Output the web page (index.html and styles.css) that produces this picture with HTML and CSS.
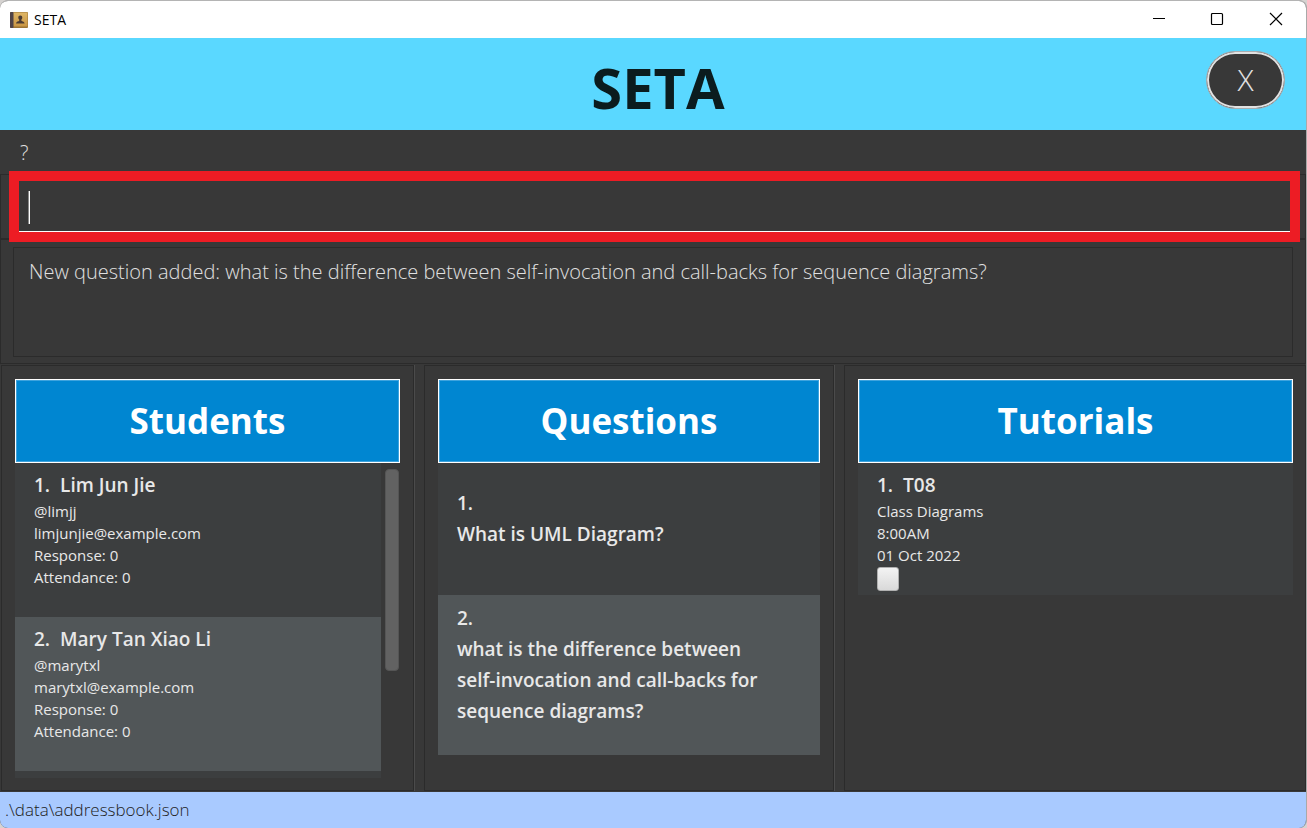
FILE: index.html
```html
<!DOCTYPE html>
<html lang="en">
<head>
<meta charset="utf-8">
<title>SETA</title>
<link rel="stylesheet" href="styles.css">
</head>
<body>
<div class="window">
  <header class="titlebar">
    <svg class="app-icon" width="18" height="18" viewBox="0 0 18 18" aria-hidden="true">
      <defs><linearGradient id="cover" x1="0" y1="0" x2="0" y2="1"><stop offset="0" stop-color="#dfb666"/><stop offset="1" stop-color="#c99643"/></linearGradient></defs>
      <rect x="0" y="1" width="18" height="16" rx="1" fill="#9b7435"/>
      <rect x="3" y="1.500" width="14.500" height="14" fill="url(#cover)"/>
      <rect x="0" y="1" width="3.500" height="16" rx="1" fill="#4f4347"/>
      <path d="M10.300 4.500c1.400 0 2 .9 2 2 0 1-.5 1.700-.9 2.100v1.200c.4.600 3 .6 3.200 2.700H6c.2-2.100 2.800-2.100 3.200-2.700V8.600c-.4-.4-.9-1.100-.9-2.100 0-1.100.6-2 2-2z" fill="#4a3b33"/>
    </svg>
    <span class="window-title">SETA</span>
    <button class="win-btn" aria-label="Minimize"><svg width="14" height="14" viewBox="0 0 14 14"><path d="M1 6.500h12" stroke="#000" fill="none"/></svg></button>
    <button class="win-btn" aria-label="Maximize"><svg width="14" height="14" viewBox="0 0 14 14"><rect x="1.500" y="1.500" width="11" height="11" rx="1" stroke="#000" stroke-width="1.200" fill="none"/></svg></button>
    <button class="win-btn" aria-label="Close"><svg width="14" height="14" viewBox="0 0 14 14"><path d="M1 1l12 12M13 1L1 13" stroke="#000" stroke-width="1.200" fill="none"/></svg></button>
  </header>

  <div class="banner">
    <h1 class="banner-title">SETA</h1>
    <button class="exit-btn">X</button>
  </div>

  <nav class="menu"><button class="menu-item">?</button></nav>

  <form class="command">
    <div class="command-field"><input class="command-input" type="text" aria-label="Command"></div>
    <div class="highlight"></div>
  </form>

  <section class="result">
    <p class="result-box">New question added: what is the difference between self-invocation and call-backs for sequence diagrams?</p>
  </section>

  <main class="panels">
    <section class="panel">
      <h2 class="panel-title">Students</h2>
      <div class="scroll-area">
        <ul class="list">
          <li class="card student">
            <h3 class="name"><span>1.</span><span>Lim Jun Jie</span></h3>
            <p class="line">@limjj</p>
            <p class="line">limjunjie@example.com</p>
            <p class="line">Response: 0</p>
            <p class="line">Attendance: 0</p>
          </li>
          <li class="card student alt">
            <h3 class="name"><span>2.</span><span>Mary Tan Xiao Li</span></h3>
            <p class="line">@marytxl</p>
            <p class="line">marytxl@example.com</p>
            <p class="line">Response: 0</p>
            <p class="line">Attendance: 0</p>
          </li>
          <li class="card rest"></li>
        </ul>
        <div class="scrollbar"><div class="thumb"></div></div>
      </div>
    </section>

    <div class="divider"></div>

    <section class="panel">
      <h2 class="panel-title">Questions</h2>
      <ul class="list">
        <li class="card question">
          <p class="question-text">1.</p>
          <h3 class="question-text">What is UML Diagram?</h3>
        </li>
        <li class="card question alt long">
          <p class="question-text">2.</p>
          <h3 class="question-text">what is the difference between self-invocation and call-backs for sequence diagrams?</h3>
        </li>
      </ul>
    </section>

    <div class="divider"></div>

    <section class="panel">
      <h2 class="panel-title">Tutorials</h2>
      <ul class="list">
        <li class="card tutorial">
          <h3 class="name"><span>1.</span><span>T08</span></h3>
          <p class="line">Class Diagrams</p>
          <p class="line">8:00AM</p>
          <p class="line">01 Oct 2022</p>
          <input class="check" type="checkbox" aria-label="Mark T08 as done">
        </li>
      </ul>
    </section>
  </main>

  <footer class="status">.\data\addressbook.json</footer>
</div>
</body>
</html>
```

FILE: styles.css
```css
* { box-sizing: border-box; }
body, h1, h2, h3, p, ul { margin: 0; padding: 0; }
ul { list-style: none; }
body {
  background: #d6d3d1;
  font-family: "Open Sans", "Noto Sans", sans-serif;
}
button { font-family: inherit; border: 0; background: none; padding: 0; }

.window {
  display: flex;
  flex-direction: column;
  min-height: 100vh;
  border-top: 1px solid #b4b4b4;
  border-right: 1px solid #a9a9a9;
  border-radius: 8px;
  overflow: hidden;
  background: #383838;
}

.titlebar {
  display: flex;
  align-items: center;
  height: 37px;
  padding-left: 10px;
  background: #fff;
}
.window-title { flex: 1; margin-left: 6px; font-size: 14px; color: #000; }
.win-btn { display: grid; place-items: center; width: 58px; height: 36px; padding-bottom: 2px; }
.win-btn:last-child { width: 60px; }

.banner {
  display: grid;
  grid-template-columns: 110px 1fr 100px;
  align-items: center;
  height: 92px;
  background: #5ad8ff;
}
.banner-title {
  grid-column: 2;
  padding-top: 6px;
  text-align: center;
  font-size: 56px;
  line-height: 72px;
  font-weight: 700;
  color: #0b1c1e;
}
.exit-btn {
  width: 79px;
  height: 58px;
  margin-bottom: 9px;
  border: 1px solid #a9adb0;
  border-radius: 29px;
  background: #383838;
  box-shadow: inset 0 0 0 2px #e2e2e2;
  color: #e2e2e2;
  font-size: 30px;
  font-weight: 300;
}

.menu { height: 44px; padding-left: 20px; display: flex; align-items: center; }
.menu-item { color: #e0e0e0; font-size: 20px; font-weight: 300; }

.command {
  position: relative;
  height: 65px;
  padding: 7px 15px 5px 18px;
  border: 1px solid #2b2b2b;
}
.command-field {
  display: flex;
  align-items: center;
  height: 50px;
  padding: 2px 0 0 9px;
  border-bottom: 1px solid #fff;
}
.command-field::before { content: ""; width: 2px; height: 33px; background: linear-gradient(90deg, #8a8a8a 50%, #fff 50%); }
.command-input {
  flex: 1;
  height: 40px;
  border: 0;
  outline: 0;
  background: transparent;
  color: #fff;
  font: 300 20px "Open Sans", sans-serif;
}
.highlight {
  position: absolute;
  inset: -4px 5px -4px 8px;
  border: 10px solid #ed1c24;
  pointer-events: none;
}

.result { padding: 7px 12px 6px; border: 1px solid #2b2b2b; }
.result-box {
  height: 110px;
  padding: 8px 15px;
  border: 1px solid #2b2b2b;
  color: #e0e0e0;
  font-size: 20px;
  line-height: 32px;
  font-weight: 300;
}

.panels {
  flex: 1;
  display: grid;
  grid-template-columns: 413fr 10px 410fr 10px 462fr;
  padding: 1px 0 1px 1px;
}
.panel {
  min-width: 0;
  display: flex;
  flex-direction: column;
  padding: 13px 13px 12px;
  border: 1px solid #2b2b2b;
}
.panel:last-child { padding-right: 12px; }
.divider { border-left: 1px solid #4b4b4b; }
.panel-title {
  height: 84px;
  border: 1px solid #fff;
  box-shadow: inset 0 0 0 1px #3da3de;
  background: #0086d1;
  color: #fff;
  text-align: center;
  font-size: 35px;
  line-height: 82px;
  font-weight: 700;
}
.scroll-area { flex: 1; display: flex; }
.scroll-area .list { flex: 1; display: flex; flex-direction: column; }
.scrollbar { width: 19px; padding: 6px 1px 0 4px; }
.thumb { height: 202px; border: 1px solid #555; border-radius: 4px; background: #626262; }

.card { padding: 6px 19px 4px; background: #3c3e3f; color: #e8e8e8; }
.alt { background: #515658; }
.rest { flex: 1; padding: 0; min-height: 7px; }
.student { height: 154px; }
.name {
  display: flex;
  gap: 10px;
  font-size: 19px;
  line-height: 32px;
  font-weight: 600;
}
.line { font-size: 15px; line-height: 22px; }
.name + .line { margin-top: -1px; }
.question {
  display: flex;
  flex-direction: column;
  justify-content: center;
  min-height: 132px;
  padding: 6px 40px 26px 19px;
}
.long { justify-content: flex-start; min-height: 160px; padding-top: 8px; }
.question-text { font-size: 19px; line-height: 31px; font-weight: 600; }
.tutorial { min-height: 132px; }
.check {
  appearance: none;
  display: block;
  width: 22px;
  height: 24px;
  margin: 1px 0 0;
  border: 1px solid #b0b0b0;
  border-radius: 3px;
  background: linear-gradient(#f3f3f3, #d9d9d9);
}

.status {
  height: 36px;
  padding-left: 5px;
  background: #a9caff;
  color: #222;
  font-size: 17px;
  line-height: 36px;
  font-weight: 300;
}
```
